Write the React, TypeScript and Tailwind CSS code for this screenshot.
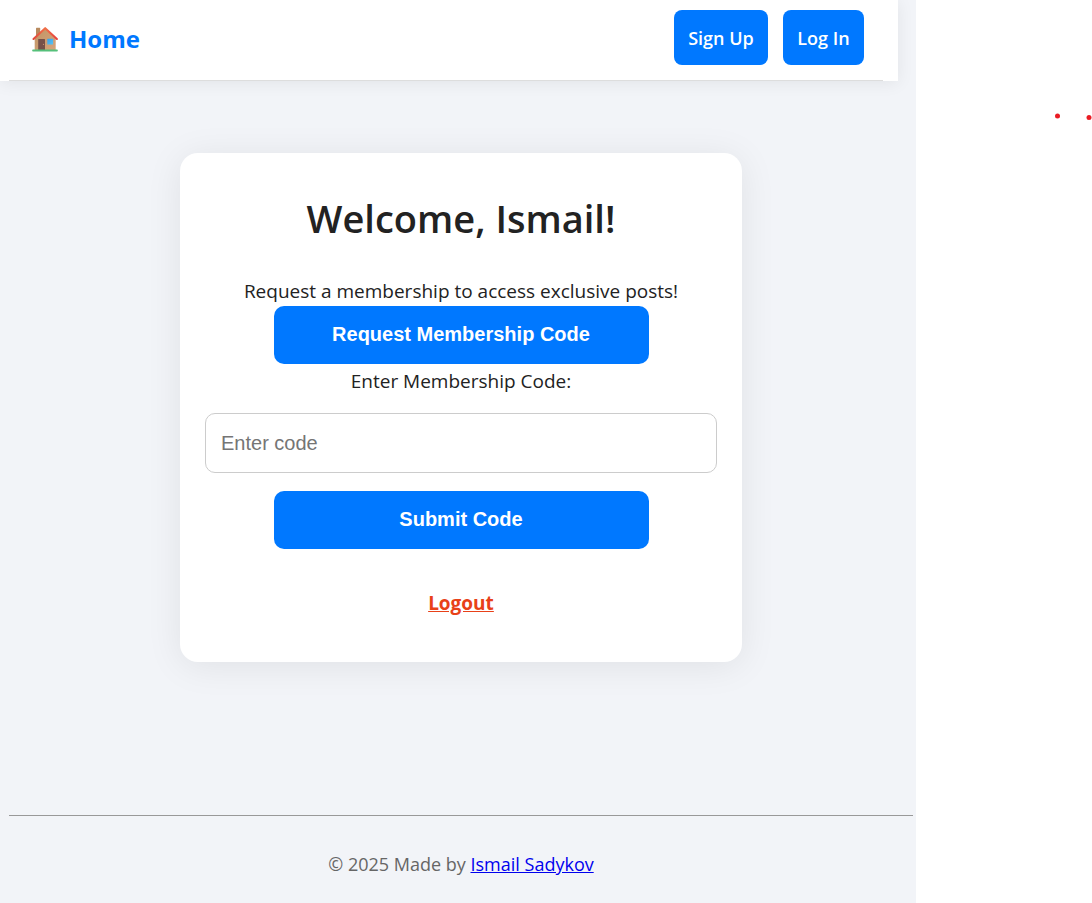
import React from 'react';

function HouseIcon() {
  return (
    <svg viewBox="0 0 28 28" className="h-7 w-7 shrink-0" aria-hidden="true">
      <defs>
        <linearGradient id="wall" x1="0" y1="0" x2="1" y2="1">
          <stop offset="0" stopColor="#c09464" />
          <stop offset="1" stopColor="#d6a47c" />
        </linearGradient>
        <linearGradient id="roof" x1="0" y1="0" x2="1" y2="0">
          <stop offset="0" stopColor="#e0483c" />
          <stop offset="0.5" stopColor="#f07048" />
          <stop offset="1" stopColor="#e8403c" />
        </linearGradient>
        <linearGradient id="pane" x1="0" y1="0" x2="1" y2="1">
          <stop offset="0" stopColor="#3a9fe8" />
          <stop offset="1" stopColor="#58c4f4" />
        </linearGradient>
      </defs>
      <rect x="5" y="2.8" width="4.2" height="9" rx="0.6" fill="#b88a5e" />
      <path d="M3.7 13 14.2 3.4 24.7 13V25.3H3.7Z" fill="url(#wall)" />
      <path d="M2.5 14 14.2 3.2 25.9 14" fill="none" stroke="url(#roof)" strokeWidth="2.1" strokeLinecap="round" strokeLinejoin="round" />
      <rect x="7.2" y="14" width="6.8" height="11" rx="0.5" fill="#765048" />
      <circle cx="12.5" cy="19.4" r="0.6" fill="#c49070" />
      <rect x="16.3" y="13.8" width="5.8" height="5.8" rx="0.4" fill="url(#pane)" />
      <rect x="1.2" y="24.4" width="25.6" height="2.2" rx="0.8" fill="#55c07a" />
    </svg>
  );
}

const primary =
  "mx-auto block h-[58px] w-[375px] max-w-full rounded-[10px] bg-[#0078ff] pb-[2px] font-['Liberation_Sans',Arial,sans-serif] text-xl font-bold text-white";

export default function App() {
  return (
    <div className="flex min-h-screen bg-white font-['Open_Sans','Noto_Sans',sans-serif] text-[#222]">
      <div className="flex min-w-0 flex-1 flex-col overflow-hidden bg-[#f2f4f8]">
        <header className="mr-[18px] bg-white pr-[15px] pl-[9px] shadow-[0_2px_16px_rgba(0,0,0,0.07)]">
          <nav className="flex h-[81px] items-start justify-between border-b border-[#ddd] pt-[10px] pr-[19px] pl-[22px]">
            <a href="#home" className="flex h-[58px] items-center gap-[10px] text-2xl font-bold text-[#0078ff]">
              <HouseIcon />
              Home
            </a>
            <div className="flex gap-[15px]">
              <a href="#signup" className="flex h-[55px] w-[94px] items-center justify-center rounded-lg bg-[#0078ff] text-lg font-semibold text-white">
                Sign Up
              </a>
              <a href="#login" className="flex h-[55px] w-[81px] items-center justify-center rounded-lg bg-[#0078ff] text-lg font-semibold text-white">
                Log In
              </a>
            </div>
          </nav>
        </header>

        <div className="flex flex-1 flex-col pr-[3px] pl-[9px]">
          <main className="mx-auto mt-[72px] mb-[153px] w-full max-w-[562px] rounded-[18px] bg-white px-[25px] pt-[35px] pb-[44px] text-center shadow-[0_4px_36px_rgba(0,0,0,0.08)]">
            <h1 className="text-[38px] leading-[60px] font-semibold">Welcome, Ismail!</h1>
            <p className="mt-[28px] text-[19px] leading-[30px]">Request a membership to access exclusive posts!</p>
            <button type="button" className={primary}>
              Request Membership Code
            </button>
            <form onSubmit={(e) => e.preventDefault()}>
              <label htmlFor="code" className="block pt-[2px] text-[19px] leading-[30px]">
                Enter Membership Code:
              </label>
              <input
                id="code"
                type="text"
                placeholder="Enter code"
                className="mt-[17px] mb-[18px] block h-[60px] w-full rounded-[10px] border border-[#ccc] bg-white px-[15px] font-['Liberation_Sans',Arial,sans-serif] text-xl placeholder:text-[#757575]"
              />
              <button type="submit" className={primary}>
                Submit Code
              </button>
            </form>
            <a href="#logout" className="mt-[39px] inline-block text-[19px] leading-[30px] font-bold text-[#e84118] underline">
              Logout
            </a>
          </main>

          <footer className="border-t border-[#999] pt-[33px] pb-[24px] text-center text-lg leading-[30px] text-[#666]">
            © 2025 Made by{' '}
            <a href="#author" className="text-[#0000ee] underline">
              Ismail Sadykov
            </a>
          </footer>
        </div>
      </div>

      <aside className="w-44 shrink-0 pt-[110px]">
        <svg viewBox="0 0 176 12" className="h-3 w-full" aria-hidden="true">
          <circle cx="141.5" cy="6" r="2.5" fill="#ea1c24" />
          <circle cx="173" cy="7.5" r="2.5" fill="#ea1c24" />
        </svg>
      </aside>
    </div>
  );
}
